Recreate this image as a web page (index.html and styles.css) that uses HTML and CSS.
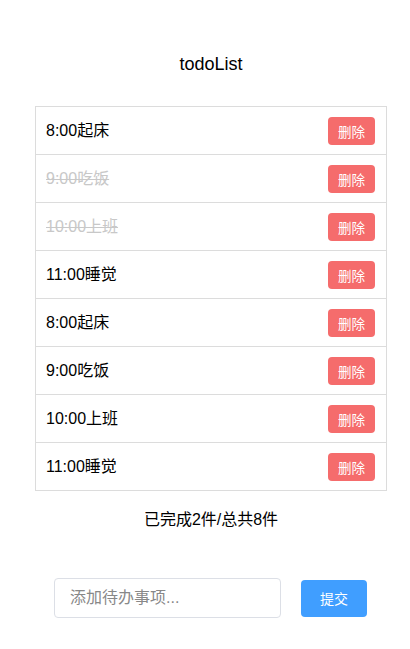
FILE: index.html
```html
<!DOCTYPE html>
<html lang="zh">
<head>
<meta charset="utf-8">
<title>todoList</title>
<link rel="stylesheet" href="styles.css">
</head>
<body>
<div class="app">
  <h1 class="title">todoList</h1>
  <ul class="list">
    <li class="item"><span class="text">8:00起床</span><button class="del">删除</button></li>
    <li class="item done"><span class="text">9:00吃饭</span><button class="del">删除</button></li>
    <li class="item done"><span class="text">10:00上班</span><button class="del">删除</button></li>
    <li class="item"><span class="text">11:00睡觉</span><button class="del">删除</button></li>
    <li class="item"><span class="text">8:00起床</span><button class="del">删除</button></li>
    <li class="item"><span class="text">9:00吃饭</span><button class="del">删除</button></li>
    <li class="item"><span class="text">10:00上班</span><button class="del">删除</button></li>
    <li class="item"><span class="text">11:00睡觉</span><button class="del">删除</button></li>
  </ul>
  <p class="stats">已完成2件/总共8件</p>
  <div class="add">
    <input class="input" type="text" placeholder="添加待办事项...">
    <button class="submit">提交</button>
  </div>
</div>
</body>
</html>
```
FILE: styles.css
```css
html, body {
  margin: 0;
  padding: 0;
  background: #fff;
}
body {
  font-family: "Liberation Sans", "Noto Sans CJK SC", sans-serif;
  font-size: 16px;
  color: #000;
}
.app {
  width: 352px;
  margin-left: 35px;
  padding-top: 52px;
}
.title {
  margin: 0;
  font-size: 18px;
  font-weight: normal;
  text-align: center;
  line-height: 24px;
  height: 24px;
}
.list {
  list-style: none;
  margin: 30px 0 0;
  padding: 0;
  border: 1px solid #dcdcdc;
  border-bottom: none;
}
.item {
  height: 47px;
  border-bottom: 1px solid #dcdcdc;
  display: flex;
  align-items: center;
  justify-content: space-between;
  padding: 0 10px 0 10px;
}
.text {
  line-height: 20px;
}
.done .text {
  color: #c8c8c8;
  text-decoration: line-through;
}
.del {
  width: 47px;
  height: 28px;
  border: none;
  border-radius: 4px;
  background: #f56c6c;
  color: #fff;
  font-family: "Liberation Sans", "Noto Sans CJK SC", sans-serif;
  font-size: 13.5px;
  padding: 0;
  margin-right: 1px;
}
.stats {
  margin: 17px 0 0;
  text-align: center;
  line-height: 24px;
}
.add {
  margin-top: 46px;
  padding-left: 19px;
  display: flex;
  align-items: center;
  gap: 20px;
}
.input {
  box-sizing: border-box;
  width: 227px;
  height: 40px;
  border: 1px solid #dcdfe6;
  border-radius: 4px;
  padding: 0 15px;
  font-family: "Liberation Sans", "Noto Sans CJK SC", sans-serif;
  font-size: 16px;
  color: #333;
  outline: none;
}
.input::placeholder {
  color: #888;
}
.submit {
  width: 66px;
  height: 37px;
  border: none;
  border-radius: 4px;
  background: #409eff;
  color: #fff;
  font-family: "Liberation Sans", "Noto Sans CJK SC", sans-serif;
  font-size: 14px;
  padding: 0;
}
```
